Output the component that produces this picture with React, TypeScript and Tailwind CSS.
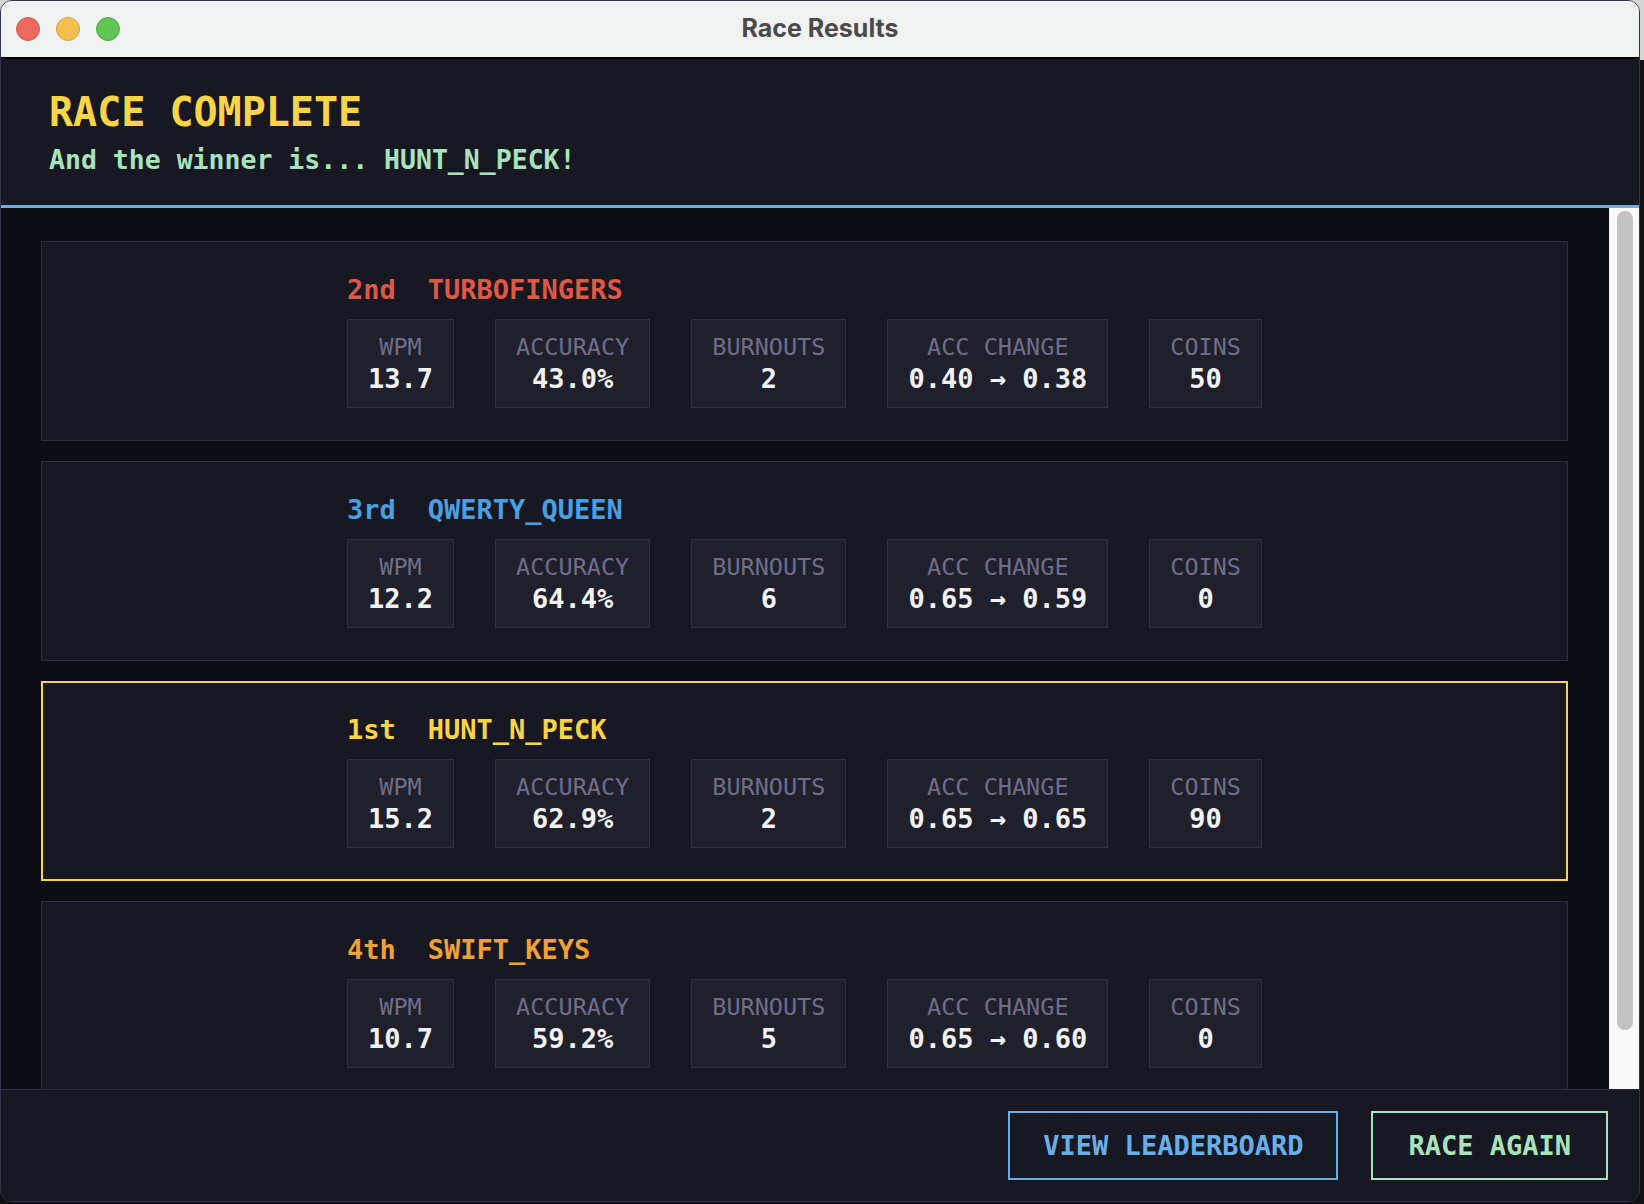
const mono = "font-['DejaVu_Sans_Mono',monospace]";

type Racer = {
  rank: string;
  name: string;
  color: string;
  wpm: string;
  accuracy: string;
  burnouts: string;
  accFrom: string;
  accTo: string;
  coins: string;
  winner?: boolean;
};

const racers: Racer[] = [
  {
    rank: "2nd",
    name: "TURBOFINGERS",
    color: "text-[#de5847]",
    wpm: "13.7",
    accuracy: "43.0%",
    burnouts: "2",
    accFrom: "0.40",
    accTo: "0.38",
    coins: "50",
  },
  {
    rank: "3rd",
    name: "QWERTY_QUEEN",
    color: "text-[#4b9fe1]",
    wpm: "12.2",
    accuracy: "64.4%",
    burnouts: "6",
    accFrom: "0.65",
    accTo: "0.59",
    coins: "0",
  },
  {
    rank: "1st",
    name: "HUNT_N_PECK",
    color: "text-[#f8d547]",
    wpm: "15.2",
    accuracy: "62.9%",
    burnouts: "2",
    accFrom: "0.65",
    accTo: "0.65",
    coins: "90",
    winner: true,
  },
  {
    rank: "4th",
    name: "SWIFT_KEYS",
    color: "text-[#eea236]",
    wpm: "10.7",
    accuracy: "59.2%",
    burnouts: "5",
    accFrom: "0.65",
    accTo: "0.60",
    coins: "0",
  },
];

function Stat({ label, value }: { label: string; value: string }) {
  return (
    <div className="flex flex-col items-center border border-[#2e2e41] bg-[#20202d] px-5 pt-[14px] pb-[13px]">
      <p className="text-[23.5px] leading-[27px] text-[#6f6d88] whitespace-pre">{label}</p>
      <p className="mt-[2px] text-[27px] leading-[31px] font-bold text-[#f2f2f4] whitespace-pre">
        {value}
      </p>
    </div>
  );
}

function RacerCard({ racer }: { racer: Racer }) {
  return (
    <div
      className={
        racer.winner
          ? "h-[200px] shrink-0 border-2 border-[#f8d547] bg-[#181823] pt-[31px]"
          : "h-[200px] shrink-0 border border-[#2c2c3d] bg-[#181823] pt-8"
      }
    >
      <div className="mx-auto w-fit">
        <div className={`flex gap-[32px] text-[27px] leading-[31px] font-bold ${racer.color}`}>
          <span>{racer.rank}</span>
          <span>{racer.name}</span>
        </div>
        <div className="mt-[14px] flex gap-[41px]">
          <Stat label="WPM" value={racer.wpm} />
          <Stat label="ACCURACY" value={racer.accuracy} />
          <Stat label="BURNOUTS" value={racer.burnouts} />
          <Stat label="ACC CHANGE" value={`${racer.accFrom} → ${racer.accTo}`} />
          <Stat label="COINS" value={racer.coins} />
        </div>
      </div>
    </div>
  );
}

export default function App() {
  return (
    <div className="h-[1204px] w-[1644px] overflow-hidden bg-[linear-gradient(to_bottom,#d6d6d6_0px,#d6d6d6_60px,#121216_60px)]">
      <div
        className={`flex h-[1202px] w-[1640px] flex-col overflow-hidden rounded-[12px] border border-[#34344a] ${mono}`}
      >
        {/* title bar */}
        <div className="relative flex h-[58px] shrink-0 items-center border-b-2 border-black bg-[#f0f2f1]">
          <div className="flex items-center gap-[16px] pl-[15px]">
            <span className="h-[24px] w-[24px] rounded-full border border-[#d95a50] bg-[#ee6a5f]" />
            <span className="h-[24px] w-[24px] rounded-full border border-[#d9a43f] bg-[#f5bf4f]" />
            <span className="h-[24px] w-[24px] rounded-full border border-[#4fae44] bg-[#61c554]" />
          </div>
          <p className="absolute inset-x-0 top-[12px] text-center font-['Inter',sans-serif] text-[25px] leading-[30px] font-bold text-[#4a4a4a]">
            Race Results
          </p>
        </div>

        {/* header */}
        <div className="shrink-0 border-b-[3px] border-[#6aaee6] bg-[#181823] px-12 pt-[30px] pb-[30px]">
          <h1 className="text-[40px] leading-[46px] font-bold text-[#f8d547]">RACE COMPLETE</h1>
          <p className="mt-[9px] text-[26.5px] leading-[31px] font-bold text-[#a8e4b9]">
            And the winner is... HUNT_N_PECK!
          </p>
        </div>

        {/* results list */}
        <div className="flex min-h-0 flex-1 bg-[#0d0d14]">
          <div className="flex min-w-0 flex-1 flex-col gap-5 overflow-hidden pt-[33px] pl-10 pr-[41px]">
            {racers.map((racer) => (
              <RacerCard key={racer.name} racer={racer} />
            ))}
          </div>
          <div className="w-[30px] shrink-0 border-l border-[#ececec] bg-[#f9f9f9] pt-[3px] pl-[7px]">
            <div className="h-[819px] w-[16px] rounded-full bg-[#c2c2c2]" />
          </div>
        </div>

        {/* footer */}
        <div className="flex shrink-0 justify-end gap-[33px] border-t border-[#2c2c3d] bg-[#181823] pt-[21px] pb-[21px] pr-[31px]">
          <button className="border-2 border-[#6aaee6] px-[33px] py-[17px] text-[27px] leading-[31px] font-bold text-[#6aaee6]">
            VIEW LEADERBOARD
          </button>
          <button className="border-2 border-[#a8e4b9] px-[35px] py-[17px] text-[27px] leading-[31px] font-bold text-[#a8e4b9]">
            RACE AGAIN
          </button>
        </div>
      </div>
    </div>
  );
}
